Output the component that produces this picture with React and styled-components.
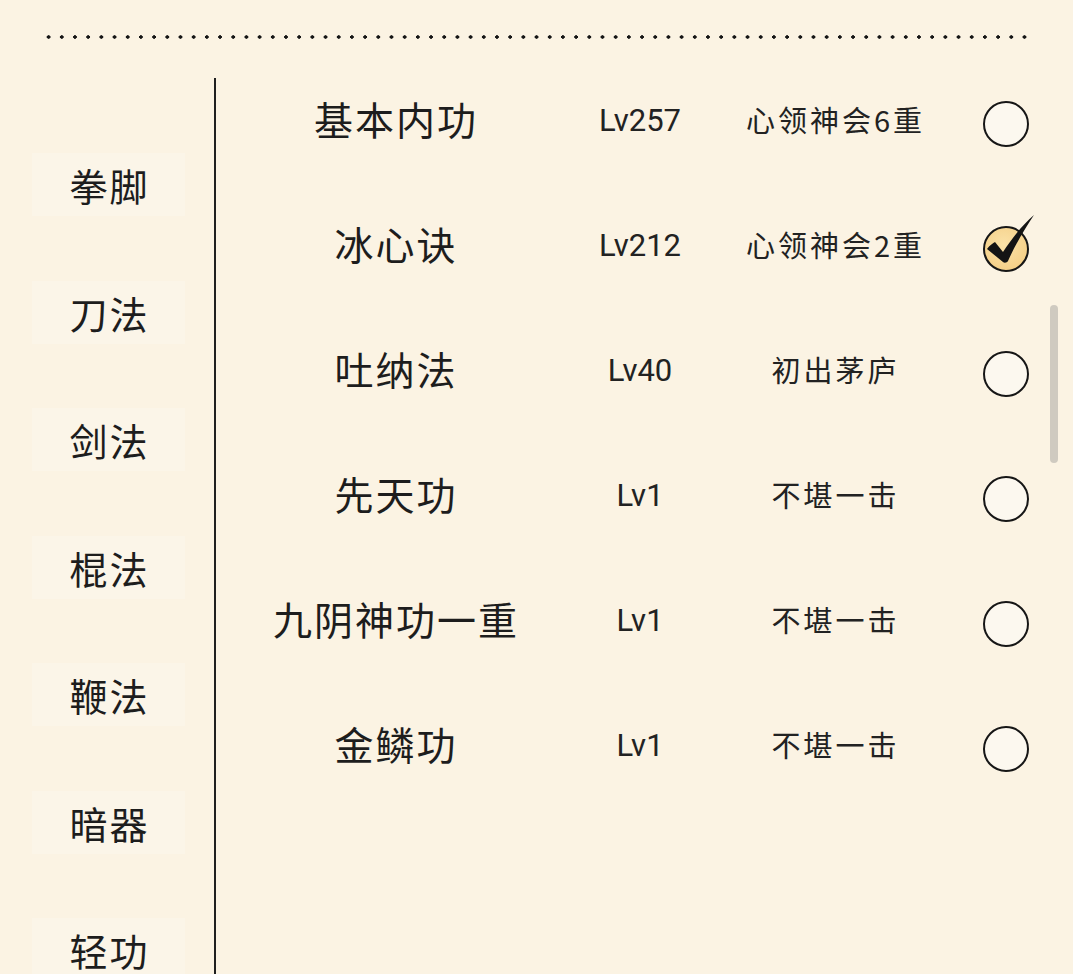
import React from "react";
import styled, { createGlobalStyle } from "styled-components";

const Global = createGlobalStyle`
  html, body {
    margin: 0;
    padding: 0;
    background: #fbf3e3;
    overflow: hidden;
  }
  body {
    font-family: "Noto Sans CJK SC", "Noto Sans", sans-serif;
    color: #1d1d1d;
  }
`;

const Page = styled.div`
  width: 1073px;
  height: 974px;
  background: #fbf3e3;
  position: relative;
  overflow: hidden;
`;

const DotRule = styled.div`
  margin: 35px 39px 0 42px;
  height: 4px;
  background-image: radial-gradient(circle, #151515 1.5px, transparent 2px);
  background-size: 13.2px 4px;
  background-repeat: repeat-x;
`;

const Body = styled.div`
  display: flex;
  margin-top: 19px;
  height: 916px;
`;

const Sidebar = styled.nav`
  width: 182px;
  margin-top: 20px;
  padding: 75px 0 0 32px;
  border-right: 2px solid #1f1f1f;
  display: flex;
  flex-direction: column;
  gap: 64.5px;
`;

const NavItem = styled.div`
  width: 153px;
  height: 63px;
  flex-shrink: 0;
  display: flex;
  align-items: center;
  justify-content: center;
  background: rgba(255, 255, 255, 0.18);
  font-size: 38px;
  letter-spacing: 2px;
  padding-left: 2px;
  box-sizing: border-box;
  color: #1d1d1d;
`;

const List = styled.div`
  flex: 1;
  display: flex;
  flex-direction: column;
`;

const Row = styled.div`
  display: grid;
  grid-template-columns: 358px 132px 256px 86px;
  height: 125px;
  align-items: center;
`;

const Name = styled.div`
  text-align: center;
  font-size: 39px;
  letter-spacing: 2px;
  padding-left: 2px;
  white-space: nowrap;
  margin-top: -6px;
`;

const Level = styled.div`
  text-align: center;
  font-family: Roboto, "Liberation Sans", sans-serif;
  font-size: 31px;
  color: #222;
`;

const Status = styled.div`
  text-align: center;
  font-size: 29px;
  letter-spacing: 3px;
  padding-left: 3px;
  white-space: nowrap;
  color: #222;
  margin-top: -4px;
`;

const CheckCell = styled.div`
  display: flex;
  justify-content: center;
  align-items: center;
  padding-top: 6px;
`;

const Circle = styled.div`
  position: relative;
  width: 46px;
  height: 46px;
  box-sizing: border-box;
  border-radius: 50%;
  border: 2.8px solid #161616;
  background: ${(p) =>
    p.$checked
      ? "radial-gradient(circle at 45% 40%, #fbe2a8 0%, #f5d18a 70%, #efc879 100%)"
      : "#fcf8ef"};
  margin-left: 2px;
`;

const Tick = styled.svg`
  position: absolute;
  left: -3px;
  top: -12px;
  width: 56px;
  height: 56px;
  overflow: visible;
`;

const ScrollThumb = styled.div`
  position: absolute;
  left: 1050px;
  top: 305px;
  width: 8px;
  height: 158px;
  border-radius: 4px;
  background: #cfcac0;
`;

const navItems = ["拳脚", "刀法", "剑法", "棍法", "鞭法", "暗器", "轻功"];

const skills = [
  { name: "基本内功", lv: "Lv257", status: "心领神会6重", checked: false },
  { name: "冰心诀", lv: "Lv212", status: "心领神会2重", checked: true },
  { name: "吐纳法", lv: "Lv40", status: "初出茅庐", checked: false },
  { name: "先天功", lv: "Lv1", status: "不堪一击", checked: false },
  { name: "九阴神功一重", lv: "Lv1", status: "不堪一击", checked: false },
  { name: "金鳞功", lv: "Lv1", status: "不堪一击", checked: false },
];

export default function App() {
  return (
    <Page>
      <Global />
      <DotRule />
      <Body>
        <Sidebar>
          {navItems.map((n) => (
            <NavItem key={n}>{n}</NavItem>
          ))}
        </Sidebar>
        <List>
          {skills.map((s) => (
            <Row key={s.name}>
              <Name>{s.name}</Name>
              <Level>{s.lv}</Level>
              <Status>{s.status}</Status>
              <CheckCell>
                <Circle $checked={s.checked}>
                  {s.checked && (
                    <Tick viewBox="0 0 56 56">
                      <path
                        d="M5 33 C8 29 11 27 13 26 L21 36 C29 24 40 9 52 -1 C44 11 34 27 26 45 C25 47 22 47 21 46 Z"
                        fill="#141414"
                      />
                    </Tick>
                  )}
                </Circle>
              </CheckCell>
            </Row>
          ))}
        </List>
      </Body>
      <ScrollThumb />
    </Page>
  );
}
